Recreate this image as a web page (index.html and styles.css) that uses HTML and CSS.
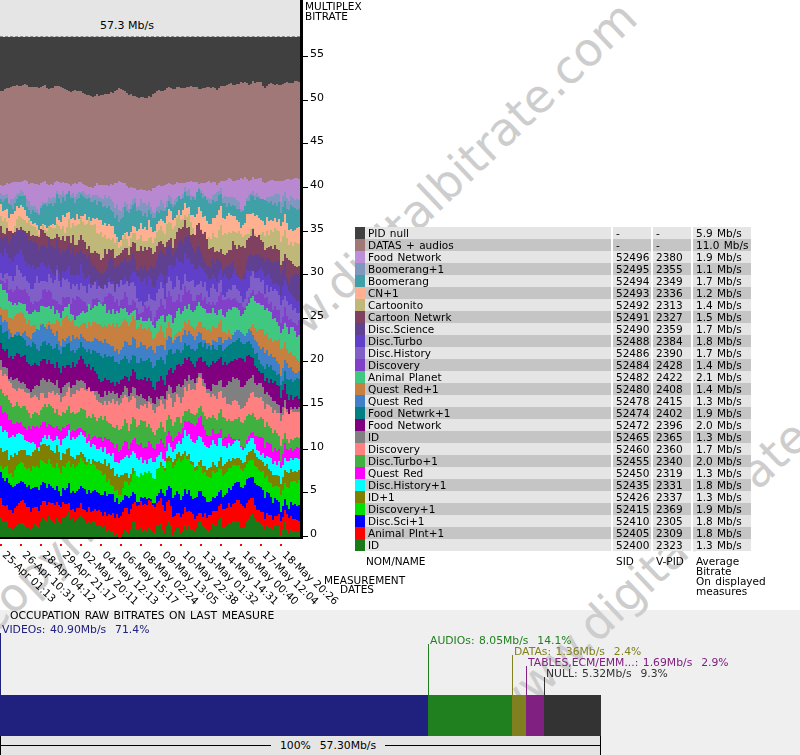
FILE: index.html
```html
<!DOCTYPE html>
<html>
  <head>
    <title>Multiplex bitrate</title>
    <meta name="viewport" content="width=device-width, initial-scale=1.0" />
    <link rel="stylesheet" href="styles.css">
  </head>

  <body>
    <div class="page">
      <!-- Watermark sits between the grey band and the content -->
      <div class="watermark">
        <div class="mark mark-one">Copyright www.digitalbitrate.com</div>
        <div class="mark mark-two">Copyright www.digitalbitrate.com</div>
      </div>

      <div class="top">
        <div class="plot">
          <div class="plot-area">
            <div class="chart-col">
              <div class="peak">57.3 Mb/s</div>
              <canvas id="chart" width="300" height="500"></canvas>
            </div>
          </div>
          <div class="dates">
            <div class="date"><i></i><span>25-Apr 01:13</span></div>
            <div class="date"><i></i><span>26-Apr 10:31</span></div>
            <div class="date"><i></i><span>28-Apr 04:12</span></div>
            <div class="date"><i></i><span>29-Apr 21:17</span></div>
            <div class="date"><i></i><span>02-May 20:11</span></div>
            <div class="date"><i></i><span>04-May 12:13</span></div>
            <div class="date"><i></i><span>06-May 15:17</span></div>
            <div class="date"><i></i><span>08-May 02:24</span></div>
            <div class="date"><i></i><span>09-May 13:05</span></div>
            <div class="date"><i></i><span>10-May 22:38</span></div>
            <div class="date"><i></i><span>13-May 01:32</span></div>
            <div class="date"><i></i><span>14-May 14:31</span></div>
            <div class="date"><i></i><span>16-May 00:40</span></div>
            <div class="date"><i></i><span>17-May 12:04</span></div>
            <div class="date"><i></i><span>18-May 20:26</span></div>
            <div class="dates-title">MEASUREMENT<br><span>DATES</span></div>
          </div>
        </div>

        <div class="scale">
          <div class="scale-title">MULTIPLEX<br>BITRATE</div>
          <div class="tick"><i></i><span>55</span></div>
          <div class="tick"><i></i><span>50</span></div>
          <div class="tick"><i></i><span>45</span></div>
          <div class="tick"><i></i><span>40</span></div>
          <div class="tick"><i></i><span>35</span></div>
          <div class="tick"><i></i><span>30</span></div>
          <div class="tick"><i></i><span>25</span></div>
          <div class="tick"><i></i><span>20</span></div>
          <div class="tick"><i></i><span>15</span></div>
          <div class="tick"><i></i><span>10</span></div>
          <div class="tick"><i></i><span>5</span></div>
          <div class="tick"><i></i><span>0</span></div>
        </div>

        <div class="legend">
          <table class="legend-table">
            <tr><td class="swatch c-null"></td><td class="name">PID null</td><td class="sid">-</td><td class="vpid">-</td><td class="rate">5.9 Mb/s</td></tr>
            <tr><td class="swatch c-datas"></td><td class="name">DATAS + audios</td><td class="sid">-</td><td class="vpid">-</td><td class="rate">11.0 Mb/s</td></tr>
            <tr><td class="swatch c-food"></td><td class="name">Food Network</td><td class="sid">52496</td><td class="vpid">2380</td><td class="rate">1.9 Mb/s</td></tr>
            <tr><td class="swatch c-boom1"></td><td class="name">Boomerang+1</td><td class="sid">52495</td><td class="vpid">2355</td><td class="rate">1.1 Mb/s</td></tr>
            <tr><td class="swatch c-boom"></td><td class="name">Boomerang</td><td class="sid">52494</td><td class="vpid">2349</td><td class="rate">1.7 Mb/s</td></tr>
            <tr><td class="swatch c-cn1"></td><td class="name">CN+1</td><td class="sid">52493</td><td class="vpid">2336</td><td class="rate">1.2 Mb/s</td></tr>
            <tr><td class="swatch c-cartoonito"></td><td class="name">Cartoonito</td><td class="sid">52492</td><td class="vpid">2313</td><td class="rate">1.4 Mb/s</td></tr>
            <tr><td class="swatch c-cartoon"></td><td class="name">Cartoon Netwrk</td><td class="sid">52491</td><td class="vpid">2327</td><td class="rate">1.5 Mb/s</td></tr>
            <tr><td class="swatch c-science"></td><td class="name">Disc.Science</td><td class="sid">52490</td><td class="vpid">2359</td><td class="rate">1.7 Mb/s</td></tr>
            <tr><td class="swatch c-turbo"></td><td class="name">Disc.Turbo</td><td class="sid">52488</td><td class="vpid">2384</td><td class="rate">1.8 Mb/s</td></tr>
            <tr><td class="swatch c-history"></td><td class="name">Disc.History</td><td class="sid">52486</td><td class="vpid">2390</td><td class="rate">1.7 Mb/s</td></tr>
            <tr><td class="swatch c-discovery"></td><td class="name">Discovery</td><td class="sid">52484</td><td class="vpid">2428</td><td class="rate">1.4 Mb/s</td></tr>
            <tr><td class="swatch c-animal"></td><td class="name">Animal Planet</td><td class="sid">52482</td><td class="vpid">2422</td><td class="rate">2.1 Mb/s</td></tr>
            <tr><td class="swatch c-qred1"></td><td class="name">Quest Red+1</td><td class="sid">52480</td><td class="vpid">2408</td><td class="rate">1.4 Mb/s</td></tr>
            <tr><td class="swatch c-qred"></td><td class="name">Quest Red</td><td class="sid">52478</td><td class="vpid">2415</td><td class="rate">1.3 Mb/s</td></tr>
            <tr><td class="swatch c-food1"></td><td class="name">Food Netwrk+1</td><td class="sid">52474</td><td class="vpid">2402</td><td class="rate">1.9 Mb/s</td></tr>
            <tr><td class="swatch c-food2"></td><td class="name">Food Network</td><td class="sid">52472</td><td class="vpid">2396</td><td class="rate">2.0 Mb/s</td></tr>
            <tr><td class="swatch c-id"></td><td class="name">ID</td><td class="sid">52465</td><td class="vpid">2365</td><td class="rate">1.3 Mb/s</td></tr>
            <tr><td class="swatch c-disc2"></td><td class="name">Discovery</td><td class="sid">52460</td><td class="vpid">2360</td><td class="rate">1.7 Mb/s</td></tr>
            <tr><td class="swatch c-turbo1"></td><td class="name">Disc.Turbo+1</td><td class="sid">52455</td><td class="vpid">2340</td><td class="rate">2.0 Mb/s</td></tr>
            <tr><td class="swatch c-qred2"></td><td class="name">Quest Red</td><td class="sid">52450</td><td class="vpid">2319</td><td class="rate">1.3 Mb/s</td></tr>
            <tr><td class="swatch c-history1"></td><td class="name">Disc.History+1</td><td class="sid">52435</td><td class="vpid">2331</td><td class="rate">1.8 Mb/s</td></tr>
            <tr><td class="swatch c-id1"></td><td class="name">ID+1</td><td class="sid">52426</td><td class="vpid">2337</td><td class="rate">1.3 Mb/s</td></tr>
            <tr><td class="swatch c-disc1"></td><td class="name">Discovery+1</td><td class="sid">52415</td><td class="vpid">2369</td><td class="rate">1.9 Mb/s</td></tr>
            <tr><td class="swatch c-sci1"></td><td class="name">Disc.Sci+1</td><td class="sid">52410</td><td class="vpid">2305</td><td class="rate">1.8 Mb/s</td></tr>
            <tr><td class="swatch c-plnt1"></td><td class="name">Animal Plnt+1</td><td class="sid">52405</td><td class="vpid">2309</td><td class="rate">1.8 Mb/s</td></tr>
            <tr><td class="swatch c-id2"></td><td class="name">ID</td><td class="sid">52400</td><td class="vpid">2323</td><td class="rate">1.3 Mb/s</td></tr>
            <tr class="legend-foot">
              <td colspan="2" class="foot-name">NOM/NAME</td>
              <td class="sid">SID</td>
              <td class="vpid">V-PID</td>
              <td class="rate">Average<br>Bitrate<br>On displayed<br>measures</td>
            </tr>
          </table>
        </div>
      </div>

      <div class="occupation">
        <div class="occ-title">OCCUPATION RAW BITRATES ON LAST MEASURE</div>
        <div class="occ-bar">
          <div class="seg seg-video" style="width: 428px">
            <div class="callout"><span>VIDEOs: 40.90Mb/s&nbsp; 71.4%</span></div>
          </div>
          <div class="seg seg-audio" style="width: 84px">
            <div class="callout"><span>AUDIOs: 8.05Mb/s&nbsp; 14.1%</span></div>
          </div>
          <div class="seg seg-data" style="width: 14px">
            <div class="callout"><span>DATAs: 1.36Mb/s&nbsp; 2.4%</span></div>
          </div>
          <div class="seg seg-tables" style="width: 18px">
            <div class="callout"><span>TABLES,ECM/EMM...: 1.69Mb/s&nbsp; 2.9%</span></div>
          </div>
          <div class="seg seg-null" style="width: 57px">
            <div class="callout"><span>NULL: 5.32Mb/s&nbsp; 9.3%</span></div>
          </div>
        </div>
        <div class="occ-total">
          <div class="rule rule-left"></div>
          <div class="total-text">100%&nbsp; 57.30Mb/s</div>
          <div class="rule rule-right"></div>
        </div>
      </div>
    </div>

    <script src="chart.js"></script>
  </body>
</html>
```

FILE: styles.css
```css
/* Multiplex bitrate report */
body {
  margin: 0;
  padding: 0;
  background-color: #fff;
  color: #000;
  font-family: "DejaVu Sans", Verdana, sans-serif;
  font-size: 10.5px;
  line-height: 10px;
}

.page {
  position: relative;
  width: 800px;
  height: 755px;
  overflow: hidden;
}

.watermark {
  position: absolute;
  top: 0;
  left: 0;
  width: 800px;
  height: 755px;
  z-index: 1;
  overflow: hidden;
}

.mark {
  position: absolute;
  font-size: 46px;
  line-height: 46px;
  word-spacing: 125px;
  color: #cdcdcd;
  white-space: nowrap;
  transform-origin: left bottom;
  transform: rotate(-43.5deg);
}

.mark-one {
  left: -6px;
  top: 598px;
}

.mark-two {
  left: 248px;
  top: 939px;
}

/* Upper part: chart, scale and legend */
.top {
  position: relative;
  z-index: 2;
  display: flex;
  height: 610px;
}

.plot {
  width: 303px;
}

.plot-area {
  width: 300px;
  border-right: 3px solid #000;
  border-bottom: 2px solid #000;
}

.chart-col {
  width: 300px;
}

.peak {
  height: 36px;
  box-sizing: content-box;
  background-color: #e5e5e5;
  border-bottom: 1px dashed #8c8c8c;
  font-size: 11px;
  line-height: 52px;
  text-align: center;
  padding-right: 46px;
  width: 254px;
}

#chart {
  display: block;
  width: 300px;
  height: 500px;
}

.dates {
  display: flex;
  width: 300px;
  margin-top: 5px;
}

.date {
  flex: 0 0 20px;
  width: 20px;
  height: 64px;
}

.date i {
  display: block;
  width: 2px;
  height: 2px;
  background-color: #f00;
}

.date span {
  display: block;
  white-space: nowrap;
  margin: 3px 0 0 8px;
  font-size: 10.5px;
  line-height: 11px;
  transform-origin: left top;
  transform: rotate(43.5deg);
}

.dates-title {
  flex: 0 0 82px;
  margin: 32px 0 0 24px;
  line-height: 9px;
  white-space: nowrap;
}

.dates-title span {
  margin-left: 16px;
}

.scale {
  width: 52px;
}

.scale-title {
  height: 13.35px;
  padding: 1px 0 0 2px;
  box-sizing: border-box;
  white-space: nowrap;
}

.tick {
  display: flex;
  align-items: flex-end;
  height: 43.65px;
}

.tick i {
  display: block;
  width: 5px;
  height: 1px;
  background-color: #000;
}

.tick span {
  margin: 0 0 -2px 2px;
  line-height: 11px;
  font-size: 11px;
}

.legend {
  padding-top: 227px;
}

.legend-table {
  border-collapse: separate;
  border-spacing: 0;
  table-layout: fixed;
  width: 396px;
  word-spacing: 1px;
}

.legend-table td {
  height: 12px;
  padding: 0;
  line-height: 12px;
  white-space: nowrap;
  vertical-align: top;
}

.legend-table tr:nth-child(odd) {
  background-color: #e5e5e5;
}

.legend-table tr:nth-child(even) {
  background-color: #c5c5c5;
}

.legend-table .swatch {
  width: 10px;
}

.legend-table .name {
  width: 243px;
  padding-left: 3px;
}

.legend-table .sid {
  width: 35px;
  padding-left: 3px;
  border-left: 2px solid #fff;
}

.legend-table .vpid {
  width: 35px;
  padding-left: 3px;
  border-left: 2px solid #fff;
}

.legend-table .rate {
  width: 55px;
  padding-left: 3px;
  border-left: 2px solid #fff;
}

.legend-table tr.legend-foot {
  background: none;
}

.legend-table .legend-foot td {
  line-height: 10px;
  padding-top: 5px;
  overflow: visible;
}

.legend-table .legend-foot .foot-name {
  padding-left: 11px;
}

.legend-table .legend-foot .sid,
.legend-table .legend-foot .vpid,
.legend-table .legend-foot .rate {
  border-left-color: transparent;
}

.c-null { background-color: #404040; }
.c-datas { background-color: #a07878; }
.c-food { background-color: #bc8fd8; }
.c-boom1 { background-color: #8098c0; }
.c-boom { background-color: #40a0a8; }
.c-cn1 { background-color: #ffb090; }
.c-cartoonito { background-color: #c0b878; }
.c-cartoon { background-color: #804060; }
.c-science { background-color: #604090; }
.c-turbo { background-color: #6040c8; }
.c-history { background-color: #8060c8; }
.c-discovery { background-color: #8040c8; }
.c-animal { background-color: #40c880; }
.c-qred1 { background-color: #c88040; }
.c-qred { background-color: #4080c8; }
.c-food1 { background-color: #008080; }
.c-food2 { background-color: #800080; }
.c-id { background-color: #808080; }
.c-disc2 { background-color: #ff8080; }
.c-turbo1 { background-color: #40b040; }
.c-qred2 { background-color: #ff00ff; }
.c-history1 { background-color: #00ffff; }
.c-id1 { background-color: #808000; }
.c-disc1 { background-color: #00e000; }
.c-sci1 { background-color: #0000ff; }
.c-plnt1 { background-color: #ff0000; }
.c-id2 { background-color: #1a7a1a; }

/* Lower band: occupation bar */
.occupation {
  height: 145px;
  background-color: #efefef;
  font-size: 10.8px;
  word-spacing: 1px;
}

.occ-title {
  position: relative;
  z-index: 2;
  height: 85px;
  padding: 0 0 0 10px;
  box-sizing: border-box;
  line-height: 12px;
}

.occ-bar {
  position: relative;
  z-index: 2;
  display: flex;
  height: 41px;
}

.seg {
  position: relative;
}

.callout {
  position: absolute;
  left: 0;
  bottom: 100%;
  border-left: 1px solid currentColor;
}

.callout span {
  position: absolute;
  left: 1px;
  bottom: calc(100% - 2px);
  white-space: nowrap;
  line-height: 11px;
}

.seg-video { background-color: #20207f; color: #20207f; }
.seg-audio { background-color: #208020; color: #208020; }
.seg-data { background-color: #808020; color: #808020; }
.seg-tables { background-color: #802080; color: #802080; }
.seg-null { background-color: #333; color: #333; }

.seg-video .callout { height: 62px; }
.seg-audio .callout { height: 51px; }
.seg-data .callout { height: 40px; }
.seg-tables .callout { height: 29px; }
.seg-null .callout { height: 18px; }

.occ-total {
  position: relative;
  z-index: 2;
  display: flex;
  align-items: center;
  width: 599px;
  height: 19px;
  background-color: #e5e5e5;
  border-left: 1px solid #000;
  border-right: 1px solid #000;
}

.rule {
  height: 1px;
  background-color: #000;
}

.rule-left {
  width: 270px;
}

.rule-right {
  flex: 1;
}

.total-text {
  padding: 0 9px;
  white-space: nowrap;
  line-height: 11px;
}
```

FILE: chart.js
```js
// Stacked bitrate chart. Boundaries are read off at every 20px of the x axis,
// then roughened with seeded noise so the picture stays the same on each load.
const BOTTOM = 537;
const TOP = 37;
const COL = 2;

let seed = 1234;
function rand() {
  seed = (seed * 16807) % 2147483647;
  return seed / 2147483647;
}

function layer(period) {
  const knots = [];
  for (let i = 0; i <= 300 / period + 1; i++) knots.push((rand() - 0.5) * 2);
  return (x) => {
    const p = x / period;
    const i = Math.floor(p);
    const f = p - i;
    return knots[i] * (1 - f) + knots[i + 1] * f;
  };
}

function makeNoise(amp) {
  const wide = layer(11);
  const fine = layer(4);
  const out = [];
  for (let x = 0; x <= 300; x += COL) {
    out.push((wide(x) * 0.8 + fine(x) * 0.8 + (rand() - 0.5) * 0.9) * amp);
  }
  return out;
}

const low = (list) => list.map((z) => 280 + z / 3);
const high = (list) => list.map((z) => z / 3);

const idTop = low([745, 750, 710, 725, 715, 745, 750, 735, 730, 750, 745, 740, 730, 735, 755, 750]);
const redTop = low([695, 685, 650, 680, 680, 705, 695, 660, 660, 700, 710, 690, 665, 700, 720, 715]);
const blueTop = low([615, 625, 600, 640, 615, 650, 650, 650, 625, 650, 655, 650, 605, 640, 680, 670]);
const limeTop = low([585, 570, 535, 570, 540, 590, 620, 580, 550, 540, 580, 590, 545, 580, 640, 590]);
const oliveTop = low([530, 535, 490, 530, 520, 560, 560, 590, 550, 520, 560, 560, 530, 550, 600, 565]);
const cyanTop = low([470, 490, 470, 480, 460, 525, 520, 530, 530, 480, 500, 500, 490, 520, 560, 520]);
const magentaTop = low([400, 445, 420, 450, 450, 490, 480, 490, 480, 460, 430, 470, 480, 480, 530, 490]);
const greenTop = low([360, 390, 370, 400, 390, 420, 430, 420, 430, 410, 400, 420, 420, 430, 490, 470]);
const salmonTop = low([290, 350, 330, 350, 320, 370, 340, 370, 370, 350, 310, 360, 380, 360, 420, 390]);
const greyTop = low([270, 320, 290, 330, 300, 350, 330, 350, 340, 310, 300, 320, 300, 320, 400, 370]);
const purpleTop = low([210, 250, 240, 280, 240, 310, 290, 290, 290, 250, 240, 260, 230, 280, 340, 350]);
const tealTop = low([170, 190, 180, 220, 190, 240, 230, 240, 220, 210, 200, 220, 170, 250, 300, 290]);
const questTop = low([140, 175, 130, 190, 170, 190, 200, 190, 180, 180, 170, 190, 150, 200, 270, 270]);
const orangeTop = low([110, 120, 120, 130, 130, 150, 120, 140, 150, 150, 140, 150, 170, 160, 210, 220]);
const animalTop = low([50, 90, 70, 100, 100, 90, 70, 120, 110, 100, 90, 100, 90, 70, 150, 150]);

const scienceTop = high([750, 700, 720, 760, 760, 830, 760, 800, 770, 720, 760, 800, 810, 760, 820, 840]);
const cartoonTop = high([710, 690, 690, 720, 710, 790, 740, 760, 730, 680, 690, 770, 740, 720, 780, 800]);
const toonitoTop = high([690, 660, 680, 690, 660, 710, 720, 700, 700, 650, 700, 700, 690, 710, 720, 720]);
const cnTop = high([660, 640, 670, 660, 640, 670, 690, 670, 670, 630, 650, 650, 660, 670, 680, 670]);
const boomTop = high([620, 600, 620, 610, 590, 620, 640, 620, 630, 600, 590, 610, 620, 610, 620, 620]);
const boom1Top = high([600, 590, 610, 590, 575, 600, 610, 610, 600, 590, 585, 590, 600, 595, 595, 590]);
const foodTop = high([555, 550, 548, 545, 550, 555, 550, 565, 560, 550, 548, 548, 540, 540, 540, 543]);
const datasTop = high([270, 262, 258, 260, 275, 285, 270, 290, 275, 265, 263, 262, 252, 250, 250, 253]);

function between(a, b, f) {
  return a.map((v, i) => v * (1 - f) + b[i] * f);
}

// Top of the stack first, so each lower series paints over the one above it
const series = [
  { color: "#a07878", top: datasTop, amp: 0.8 },
  { color: "#b888d0", top: foodTop, amp: 0.8 },
  { color: "#8098c0", top: boom1Top, amp: 6 },
  { color: "#40a0a8", top: boomTop, amp: 7 },
  { color: "#ffb090", top: cnTop, amp: 7 },
  { color: "#c0b878", top: toonitoTop, amp: 8 },
  { color: "#804060", top: cartoonTop, amp: 9 },
  { color: "#604090", top: scienceTop, amp: 9 },
  { color: "#6040c8", top: between(scienceTop, animalTop, 0.3), amp: 11 },
  { color: "#8060c8", top: between(scienceTop, animalTop, 0.55), amp: 11 },
  { color: "#8040c8", top: between(scienceTop, animalTop, 0.8), amp: 9 },
  { color: "#40c880", top: animalTop, amp: 7 },
  { color: "#c88040", top: orangeTop, amp: 7 },
  { color: "#4080c8", top: questTop, amp: 6 },
  { color: "#008080", top: tealTop, amp: 6 },
  { color: "#800080", top: purpleTop, amp: 6 },
  { color: "#808080", top: greyTop, amp: 6 },
  { color: "#ff8080", top: salmonTop, amp: 6 },
  { color: "#40b040", top: greenTop, amp: 6 },
  { color: "#ff00ff", top: magentaTop, amp: 6 },
  { color: "#00ffff", top: cyanTop, amp: 6 },
  { color: "#808000", top: oliveTop, amp: 6 },
  { color: "#00e000", top: limeTop, amp: 5 },
  { color: "#0000ff", top: blueTop, amp: 5 },
  { color: "#ff0000", top: redTop, amp: 5 },
  { color: "#1a7a1a", top: idTop, amp: 2.5 },
];

function drawChart() {
  const ctx = document.getElementById("chart").getContext("2d");
  ctx.fillStyle = "#404040";
  ctx.fillRect(0, 0, 300, BOTTOM - TOP);

  const shared = makeNoise(7);
  const sharedTop = makeNoise(2.5);

  series.forEach((s, index) => {
    const own = makeNoise(s.amp);
    ctx.fillStyle = s.color;
    for (let x = 0; x < 300; x += COL) {
      const step = x / COL;
      const p = x / 20;
      const i = Math.min(Math.floor(p), 14);
      const f = p - i;
      const base = s.top[i] * (1 - f) + s.top[i + 1] * f;
      const common = index < 2 ? sharedTop[step] : shared[step];
      const y = Math.round(base + own[step] * 0.6 + common);
      ctx.fillRect(x, Math.min(y, BOTTOM) - TOP, COL, Math.max(BOTTOM - y, 0));
    }
  });
}

drawChart();
```
